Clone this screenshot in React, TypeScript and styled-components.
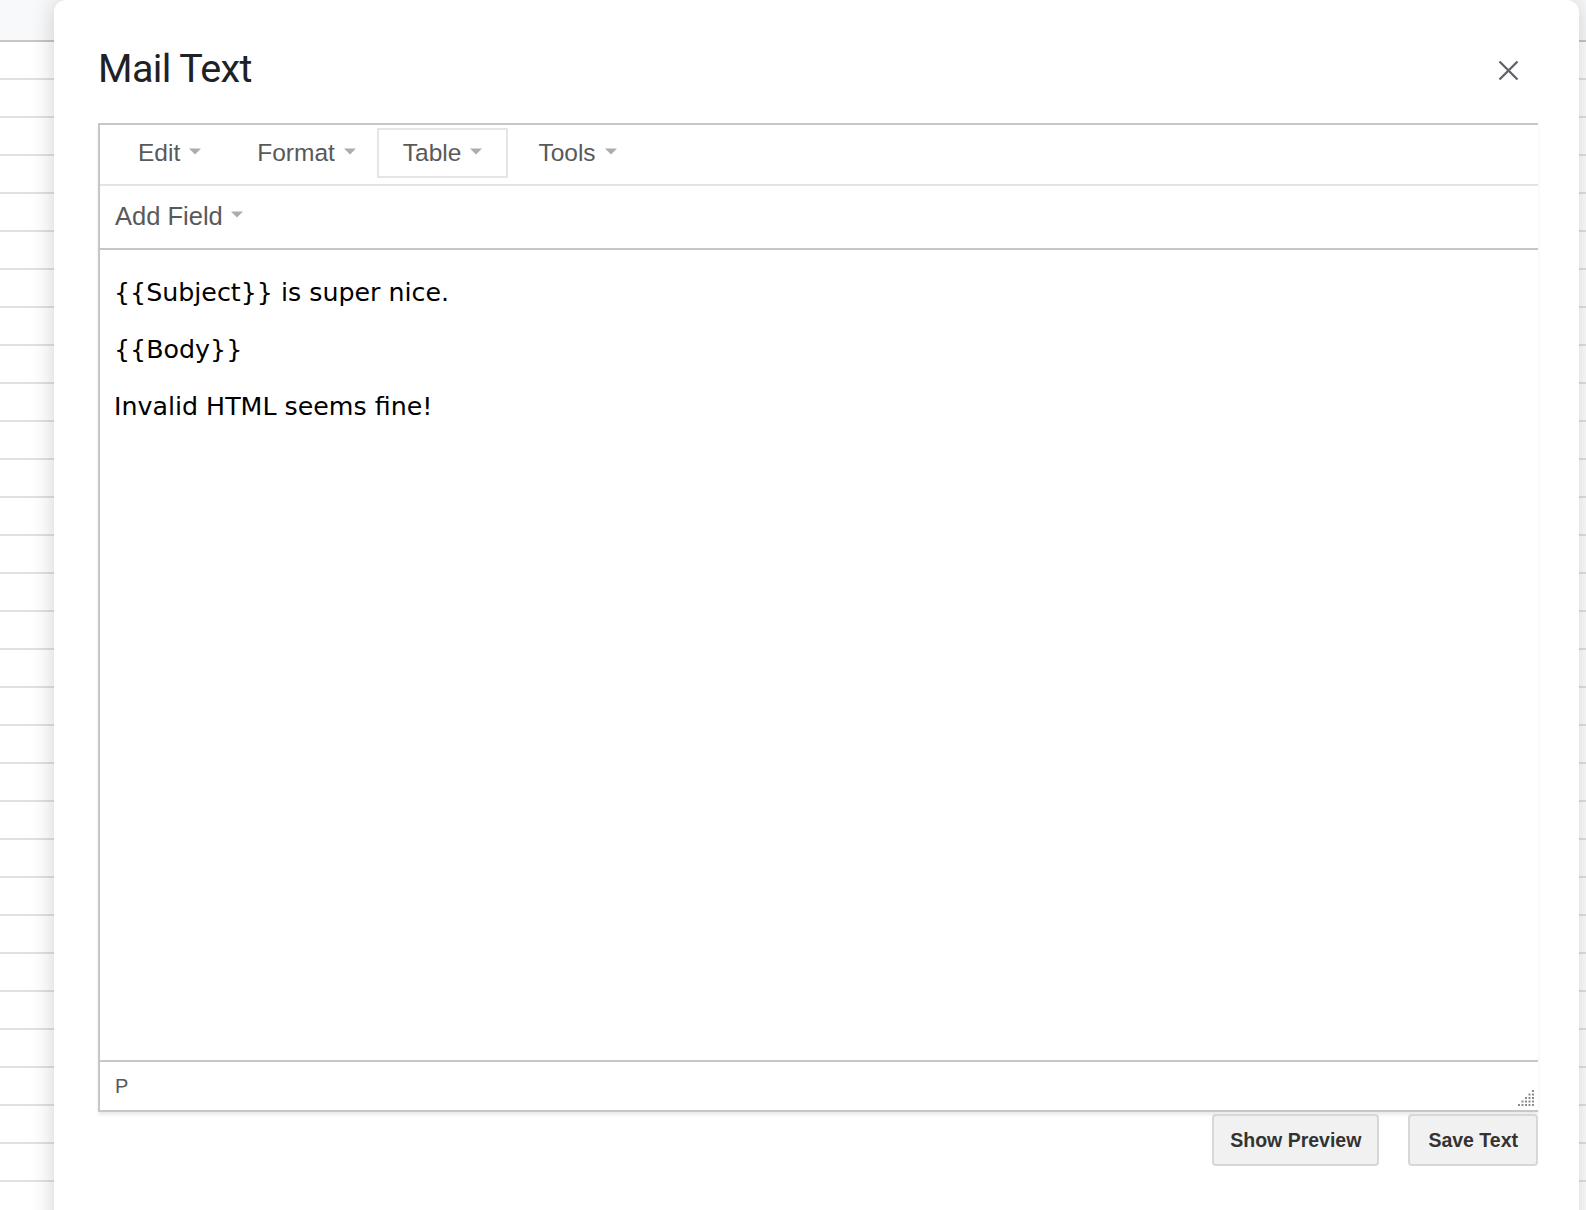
import React from "react";
import styled, { createGlobalStyle, css } from "styled-components";

const GlobalStyle = createGlobalStyle`
  html, body { margin: 0; padding: 0; background: #fff; }
  body { font-family: "Liberation Sans", Arial, sans-serif; }
  * { box-sizing: border-box; }
`;

const Sheet = styled.div`
  height: 1210px;
  overflow: hidden;
  padding-left: 54px;
  background-color: #fff;
  background-image:
    linear-gradient(#f8f9fa, #f8f9fa),
    linear-gradient(#c6c6c6, #c6c6c6),
    linear-gradient(to bottom, #e1e1e1 0, #e1e1e1 2px, transparent 2px);
  background-size: 100% 40px, 100% 2px, 100% 38px;
  background-position: 0 0, 0 40px, 0 2px;
  background-repeat: no-repeat, no-repeat, repeat-y;
`;

const Dialog = styled.div`
  width: 1525px;
  min-height: 1240px;
  background: #fff;
  border-radius: 12px 12px 0 0;
  box-shadow: 0 0 24px rgba(0, 0, 0, 0.18);
  padding: 0 41px 0 44px;
  display: flex;
  flex-direction: column;
`;

const Header = styled.div`
  height: 123px;
  padding: 20px 19px 7px 0;
  display: flex;
  align-items: center;
  justify-content: space-between;
`;

const Title = styled.h1`
  margin: 0;
  font-family: Roboto, "Liberation Sans", sans-serif;
  font-weight: 400;
  font-size: 39.5px;
  letter-spacing: -0.6px;
  color: #202124;
`;

const CloseButton = styled.button`
  width: 21px;
  height: 21px;
  padding: 0;
  margin-top: 4px;
  border: none;
  background: transparent;
  display: flex;
  cursor: pointer;
`;

const Editor = styled.div`
  height: 989px;
  display: flex;
  flex-direction: column;
  border-top: 2px solid #c6c6c6;
  border-left: 2px solid #c6c6c6;
  border-bottom: 2px solid #c8c8c8;
  box-shadow: 0 3px 3px rgba(0, 0, 0, 0.08);
`;

const MenuBar = styled.div`
  height: 61px;
  display: flex;
  align-items: center;
  padding: 0 0 3px 12px;
  border-bottom: 2px solid #e3e3e3;
`;

const MenuButton = styled.button<{ $active?: boolean }>`
  display: inline-flex;
  align-items: center;
  gap: 9px;
  height: 50px;
  padding: 0 24px;
  margin-right: 4px;
  border: 2px solid transparent;
  border-radius: 1px;
  background: transparent;
  font-family: "Liberation Sans", Arial, sans-serif;
  font-size: 24.5px;
  color: #595959;
  cursor: pointer;
  ${(p) =>
    p.$active &&
    css`
      border-color: #e3e5e8;
      margin-left: -9px;
    `}
`;

const Caret = styled.span`
  width: 0;
  height: 0;
  border-left: 6px solid transparent;
  border-right: 6px solid transparent;
  border-top: 6px solid #a9aeb4;
  transform: translateY(-1.5px);
`;

const Toolbar = styled.div`
  height: 64px;
  display: flex;
  align-items: center;
  padding: 0 0 2px 15px;
  border-bottom: 2px solid #c6c6c6;
`;

const FieldButton = styled.button`
  display: inline-flex;
  align-items: center;
  gap: 8px;
  padding: 0;
  border: none;
  background: transparent;
  font-family: "Liberation Sans", Arial, sans-serif;
  font-size: 25.5px;
  color: #595959;
  cursor: pointer;
`;

const Content = styled.div`
  flex: 1;
  padding: 27px 0 0 14px;
  font-family: "DejaVu Sans", Verdana, sans-serif;
  font-size: 25.3px;
  line-height: 32px;
  color: #000;

  p {
    margin: 0 0 25px;
  }
`;

const StatusBar = styled.div`
  height: 50px;
  display: flex;
  align-items: center;
  justify-content: space-between;
  padding: 0 4px 0 15px;
  border-top: 2px solid #c8c8c8;
`;

const Path = styled.span`
  font-family: "Liberation Sans", Arial, sans-serif;
  font-size: 20px;
  color: #595959;
`;

const ResizeHandle = styled.svg`
  align-self: flex-end;
  margin-bottom: 4px;
`;

const Footer = styled.div`
  display: flex;
  justify-content: flex-end;
  gap: 29px;
  padding-top: 2px;
`;

const ActionButton = styled.button<{ $pad: number }>`
  height: 52px;
  padding: 0 ${(p) => p.$pad}px;
  background: #f1f1f1;
  border: 2px solid #d7d7d7;
  border-radius: 4px;
  font-family: "Liberation Sans", Arial, sans-serif;
  font-weight: 700;
  font-size: 19.5px;
  color: #333;
  cursor: pointer;
`;

const menus = ["Edit", "Format", "Table", "Tools"];

function Dots() {
  const rects: React.ReactNode[] = [];
  for (let r = 0; r < 5; r++) {
    for (let c = 4 - r; c < 5; c++) {
      rects.push(
        <rect key={`${r}-${c}`} x={c * 3.5} y={r * 3.5} width={2} height={2} fill="#8c8c8c" />
      );
    }
  }
  return (
    <ResizeHandle width={16} height={16} viewBox="0 0 16 16">
      {rects}
    </ResizeHandle>
  );
}

export default function App() {
  return (
    <>
      <GlobalStyle />
      <Sheet>
        <Dialog>
          <Header>
            <Title>Mail Text</Title>
            <CloseButton aria-label="Close">
              <svg width="21" height="21" viewBox="0 0 21 21">
                <path
                  d="M1.5 1.5 L19.5 19.5 M19.5 1.5 L1.5 19.5"
                  stroke="#5f6368"
                  strokeWidth="2.3"
                  fill="none"
                />
              </svg>
            </CloseButton>
          </Header>
          <Editor>
            <MenuBar>
              {menus.map((m) => (
                <MenuButton key={m} $active={m === "Table"}>
                  {m}
                  <Caret />
                </MenuButton>
              ))}
            </MenuBar>
            <Toolbar>
              <FieldButton>
                Add Field
                <Caret />
              </FieldButton>
            </Toolbar>
            <Content>
              <p>{"{{Subject}} is super nice."}</p>
              <p>{"{{Body}}"}</p>
              <p>Invalid HTML seems fine!</p>
            </Content>
            <StatusBar>
              <Path>P</Path>
              <Dots />
            </StatusBar>
          </Editor>
          <Footer>
            <ActionButton $pad={16}>Show Preview</ActionButton>
            <ActionButton $pad={18}>Save Text</ActionButton>
          </Footer>
        </Dialog>
      </Sheet>
    </>
  );
}
